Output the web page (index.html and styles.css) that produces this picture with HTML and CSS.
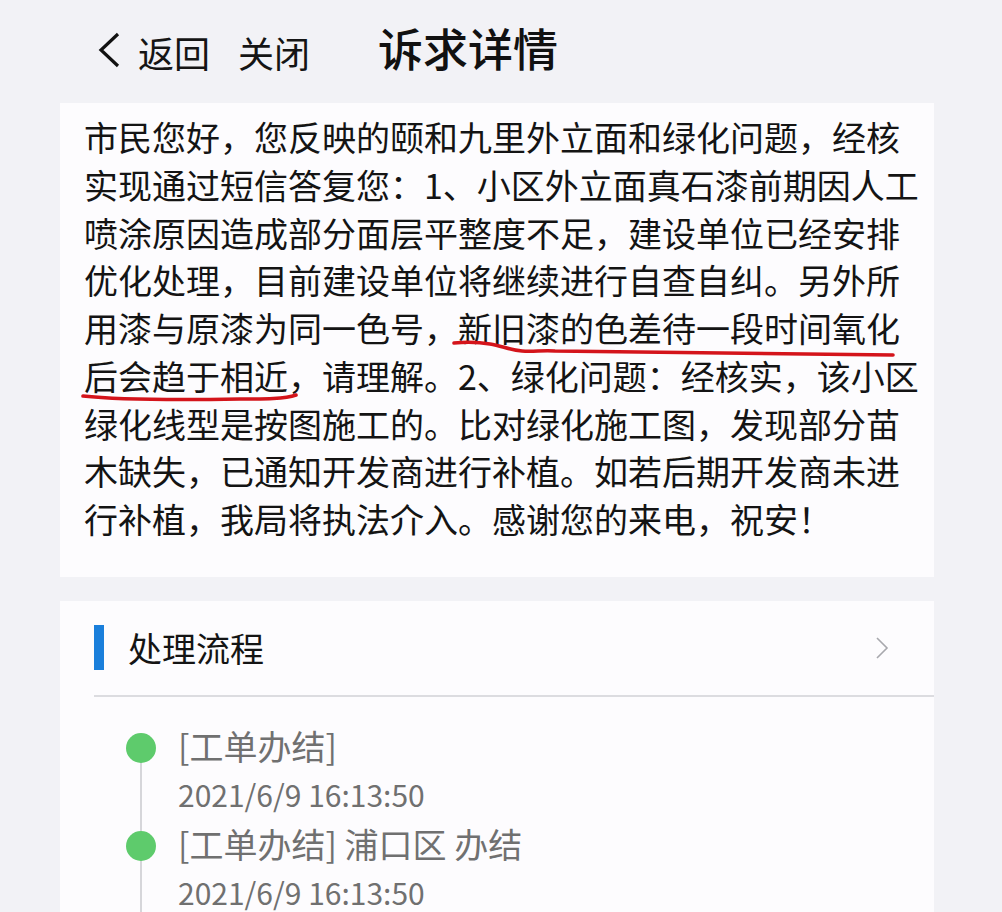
FILE: index.html
```html
<!DOCTYPE html>
<html lang="zh-CN">
<head>
<meta charset="utf-8">
<title>诉求详情</title>
<link rel="stylesheet" href="styles.css">
</head>
<body>
<div class="page">
  <header class="topbar">
    <div class="nav-left">
      <svg class="back-icon" width="24" height="36" viewBox="0 0 24 36"><polyline points="20,2 3,18 20,34" fill="none" stroke="#111" stroke-width="3.2" stroke-linejoin="miter"/></svg>
      <span class="nav-link">返回</span>
      <span class="nav-link close">关闭</span>
    </div>
    <h1 class="title">诉求详情</h1>
  </header>

  <section class="card reply">
    <p class="reply-text">市民您好，您反映的颐和九里外立面和绿化问题，经核<br>实现通过短信答复您：1、小区外立面真石漆前期因人工<br>喷涂原因造成部分面层平整度不足，建设单位已经安排<br>优化处理，目前建设单位将继续进行自查自纠。另外所<br>用漆与原漆为同一色号，新旧漆的色差待一段时间氧化<br>后会趋于相近，请理解。2、绿化问题：经核实，该小区<br>绿化线型是按图施工的。比对绿化施工图，发现部分苗<br>木缺失，已通知开发商进行补植。如若后期开发商未进<br>行补植，我局将执法介入。感谢您的来电，祝安！</p>
    <svg class="marks" width="875" height="474" viewBox="0 0 875 474">
      <path d="M394 240 C405 239 418 239 430 241 C442 243 450 247 462 248 C474 249 482 247 495 248 L833 252" fill="none" stroke="#d4141b" stroke-width="3.6" stroke-linecap="round"/>
      <path d="M23 293 C60 297 120 297 180 296 C205 296 225 296 236 292" fill="none" stroke="#d4141b" stroke-width="3.6" stroke-linecap="round"/>
    </svg>
  </section>

  <section class="card flow">
    <div class="flow-head">
      <span class="flow-bar"></span>
      <span class="flow-title">处理流程</span>
      <svg class="chev" width="14" height="24" viewBox="0 0 14 24"><polyline points="2,2 12,12 2,22" fill="none" stroke="#a8a8ad" stroke-width="1.6"/></svg>
    </div>
    <ul class="timeline">
      <li class="step">
        <span class="dot"></span>
        <div class="step-body">
          <div class="step-title">[工单办结]</div>
          <div class="step-time">2021/6/9 16:13:50</div>
        </div>
      </li>
      <li class="step">
        <span class="dot"></span>
        <div class="step-body">
          <div class="step-title">[工单办结] 浦口区 办结</div>
          <div class="step-time">2021/6/9 16:13:50</div>
        </div>
      </li>
    </ul>
  </section>
</div>
</body>
</html>
```

FILE: styles.css
```css
html, body {
  margin: 0;
  padding: 0;
  background: #f2f2f6;
  height: 912px;
  overflow: hidden;
}
body {
  font-family: "Noto Sans CJK SC", "Noto Sans", sans-serif;
  color: #111;
}
.page {
  width: 1002px;
  padding: 0 68px 0 60px;
  box-sizing: border-box;
}
.topbar {
  height: 103px;
  display: flex;
  align-items: center;
}
.nav-left {
  display: flex;
  align-items: center;
  padding-left: 38px;
  width: 282px;
  box-sizing: border-box;
}
.back-icon {
  margin-right: 16px;
  margin-top: -4px;
}
.nav-link {
  font-size: 36px;
  line-height: 1;
  color: #151515;
}
.nav-link.close {
  margin-left: 28px;
}
.title {
  margin: -8px 0 0 36px;
  font-size: 45px;
  font-weight: 500;
  line-height: 1;
}
.card {
  background: #fdfcfe;
}
.reply {
  position: relative;
  padding: 10px 10px 34px 24px;
}
.reply-text {
  margin: 0;
  font-size: 34px;
  line-height: 47.75px;
  white-space: nowrap;
  color: #141414;
}
.marks {
  position: absolute;
  left: 0;
  top: 0;
  pointer-events: none;
}
.flow {
  margin-top: 24px;
  height: 400px;
}
.flow-head {
  height: 96px;
  display: flex;
  align-items: center;
  margin-left: 34px;
  border-bottom: 2px solid #dcdce0;
  box-sizing: border-box;
}
.flow-bar {
  width: 10px;
  height: 45px;
  background: #1a7fdb;
  margin-right: 24px;
}
.flow-title {
  font-size: 34px;
  line-height: 1;
  flex: 1;
  color: #141414;
}
.chev {
  margin-right: 45px;
}
.timeline {
  list-style: none;
  margin: 0;
  padding: 24px 0 0 66px;
}
.step {
  display: flex;
  position: relative;
  height: 98px;
}
.step::before {
  content: "";
  position: absolute;
  left: 14px;
  top: 28px;
  bottom: -28px;
  width: 2px;
  background: #d6d6da;
}
.dot {
  width: 30px;
  height: 30px;
  border-radius: 50%;
  background: #5ecb6c;
  margin-top: 12px;
  flex: none;
  position: relative;
}
.step-body {
  margin-left: 22px;
}
.step-title {
  font-size: 34px;
  line-height: 50px;
  color: #707070;
}
.step-time {
  font-size: 30px;
  line-height: 46px;
  color: #707070;
}
```
